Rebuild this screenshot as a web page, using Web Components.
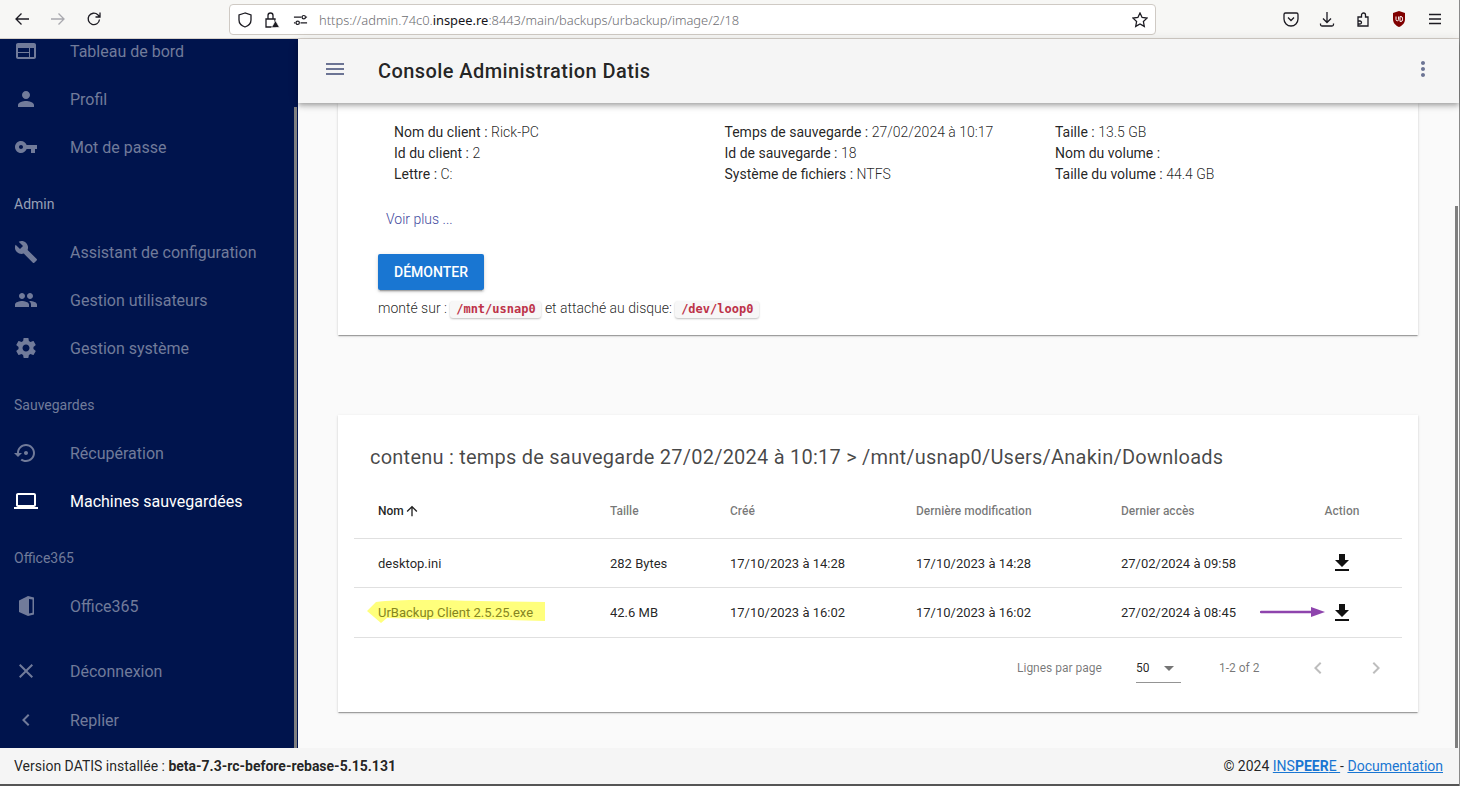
<!DOCTYPE html>
<html lang="fr">
<head>
<meta charset="utf-8">
<title>Console Administration Datis</title>
<style>
  html, body { margin: 0; height: 100%; overflow: hidden; }
  body { font-family: Roboto, "Liberation Sans", sans-serif; }
</style>
</head>
<body>
<admin-app>
  <browser-bar slot="bar" url-start="https://admin.74c0." url-domain="inspee.re" url-end=":8443/main/backups/urbackup/image/2/18"></browser-bar>

  <side-nav slot="side">
    <nav-item icon="web">Tableau de bord</nav-item>
    <nav-item icon="person">Profil</nav-item>
    <nav-item icon="key">Mot de passe</nav-item>
    <nav-label bright>Admin</nav-label>
    <nav-item icon="build">Assistant de configuration</nav-item>
    <nav-item icon="people">Gestion utilisateurs</nav-item>
    <nav-item icon="settings">Gestion système</nav-item>
    <nav-label>Sauvegardes</nav-label>
    <nav-item icon="restore">Récupération</nav-item>
    <nav-item icon="laptop" active>Machines sauvegardées</nav-item>
    <nav-label>Office365</nav-label>
    <nav-item icon="office">Office365</nav-item>
    <nav-item icon="close" class="spaced">Déconnexion</nav-item>
    <nav-item icon="left" class="last">Replier</nav-item>
  </side-nav>

  <app-header slot="header">Console Administration Datis</app-header>

  <info-card slot="main"></info-card>

  <file-table slot="main" title-text="contenu : temps de sauvegarde 27/02/2024 à 10:17 &gt; /mnt/usnap0/Users/Anakin/Downloads">
    <file-row name="desktop.ini" size="282 Bytes" created="17/10/2023 à 14:28" modified="17/10/2023 à 14:28" accessed="27/02/2024 à 09:58"></file-row>
    <file-row marked name="UrBackup Client 2.5.25.exe" size="42.6 MB" created="17/10/2023 à 16:02" modified="17/10/2023 à 16:02" accessed="27/02/2024 à 08:45"></file-row>
  </file-table>

  <app-footer slot="footer"></app-footer>
</admin-app>

<script>
'use strict';

const icons = {
  web: 'M20 4H4c-1.1 0-1.99.9-1.99 2L2 18c0 1.1.9 2 2 2h16c1.1 0 2-.9 2-2V6c0-1.1-.9-2-2-2zm-5 14H4v-4h11v4zm0-5H4V9h11v4zm5 5h-4V9h4v9z',
  person: 'M12 12c2.21 0 4-1.79 4-4s-1.79-4-4-4-4 1.79-4 4 1.79 4 4 4zm0 2c-2.67 0-8 1.34-8 4v2h16v-2c0-2.66-5.33-4-8-4z',
  key: 'M12.65 10C11.83 7.67 9.61 6 7 6c-3.31 0-6 2.69-6 6s2.69 6 6 6c2.61 0 4.83-1.67 5.65-4H17v4h4v-4h2v-4H12.65zM7 14c-1.1 0-2-.9-2-2s.9-2 2-2 2 .9 2 2-.9 2-2 2z',
  build: 'M22.7 19l-9.1-9.1c.9-2.3.4-5-1.5-6.9-2-2-5-2.4-7.4-1.3L9 6 6 9 1.6 4.7C.4 7.1.9 10.1 2.9 12.1c1.9 1.9 4.6 2.4 6.9 1.5l9.1 9.1c.4.4 1 .4 1.4 0l2.3-2.3c.5-.4.5-1.1.1-1.4z',
  people: 'M16 11c1.66 0 2.99-1.34 2.99-3S17.66 5 16 5c-1.66 0-3 1.34-3 3s1.34 3 3 3zm-8 0c1.66 0 2.99-1.34 2.99-3S9.66 5 8 5C6.34 5 5 6.34 5 8s1.34 3 3 3zm0 2c-2.33 0-7 1.17-7 3.5V19h14v-2.5c0-2.33-4.67-3.5-7-3.5zm8 0c-.29 0-.62.02-.97.05 1.16.84 1.97 1.97 1.97 3.45V19h6v-2.5c0-2.33-4.67-3.5-7-3.5z',
  settings: 'M19.43 12.98c.04-.32.07-.64.07-.98s-.03-.66-.07-.98l2.11-1.65c.19-.15.24-.42.12-.64l-2-3.46c-.12-.22-.39-.3-.61-.22l-2.49 1c-.52-.4-1.08-.73-1.69-.98l-.38-2.65C14.46 2.18 14.25 2 14 2h-4c-.25 0-.46.18-.49.42l-.38 2.65c-.61.25-1.17.59-1.69.98l-2.49-1c-.23-.09-.49 0-.61.22l-2 3.46c-.13.22-.07.49.12.64l2.11 1.65c-.04.32-.07.65-.07.98s.03.66.07.98l-2.11 1.65c-.19.15-.24.42-.12.64l2 3.46c.12.22.39.3.61.22l2.49-1c.52.4 1.08.73 1.69.98l.38 2.65c.03.24.24.42.49.42h4c.25 0 .46-.18.49-.42l.38-2.65c.61-.25 1.17-.59 1.69-.98l2.49 1c.23.09.49 0 .61-.22l2-3.46c.12-.22.07-.49-.12-.64l-2.11-1.65zM12 15.5c-1.93 0-3.5-1.57-3.5-3.5s1.57-3.5 3.5-3.5 3.5 1.57 3.5 3.5-1.57 3.5-3.5 3.5z',
  restore: 'M14 12c0-1.1-.9-2-2-2s-2 .9-2 2 .9 2 2 2 2-.9 2-2zm-2-9c-4.97 0-9 4.03-9 9H0l4 4 4-4H5c0-3.87 3.13-7 7-7s7 3.13 7 7-3.13 7-7 7c-1.51 0-2.91-.49-4.06-1.3l-1.42 1.44C8.04 20.3 9.94 21 12 21c4.97 0 9-4.03 9-9s-4.03-9-9-9z',
  laptop: 'M20 18c1.1 0 1.99-.9 1.99-2L22 6c0-1.1-.9-2-2-2H4c-1.1 0-2 .9-2 2v10c0 1.1.9 2 2 2H0v2h24v-2h-4zM4 6h16v10H4V6z',
  office: 'M5 6.500 14 2l6 1.500v17L14 22l-9-4zM15 5v14.500l3.500-.8V5.500z',
  close: 'M19 6.41L17.59 5 12 10.59 6.41 5 5 6.41 10.59 12 5 17.59 6.41 19 12 13.41 17.59 19 19 17.59 13.41 12z',
  left: 'M15.41 7.41L14 6l-6 6 6 6 1.41-1.41L10.83 12z',
  right: 'M10 6L8.59 7.41 13.17 12l-4.58 4.59L10 18l6-6z',
  menu: 'M3 18h18v-2H3v2zm0-5h18v-2H3v2zm0-7v2h18V6H3z',
  more: 'M12 8c1.1 0 2-.9 2-2s-.9-2-2-2-2 .9-2 2 .9 2 2 2zm0 2c-1.1 0-2 .9-2 2s.9 2 2 2 2-.9 2-2-.9-2-2-2zm0 6c-1.1 0-2 .9-2 2s.9 2 2 2 2-.9 2-2-.9-2-2-2z',
  download: 'M19 9h-4V3H9v6H5l7 7 7-7zM5 18v2h14v-2H5z',
  up: 'M4 12l1.41 1.41L11 7.83V20h2V7.83l5.58 5.59L20 12l-8-8-8 8z',
  drop: 'M7 10l5 5 5-5z',
};

const svg = (name, size = 24) =>
  `<svg width="${size}" height="${size}" viewBox="0 0 24 24" fill="currentColor" fill-rule="evenodd"><path d="${icons[name]}"/></svg>`;

// small base class, every element just gives its markup
class Shadowed extends HTMLElement {
  constructor() {
    super();
    this.attachShadow({ mode: 'open' });
  }
  connectedCallback() {
    this.shadowRoot.innerHTML = this.render();
  }
}

customElements.define('admin-app', class extends Shadowed {
  render() {
    return `
      <style>
        :host {
          display: grid;
          grid-template-columns: minmax(0, 1fr);
          grid-template-rows: 39px 1fr 38px;
          height: 786px;
          background: #fafafa;
          border-right: 1px solid #8a8a8a;
        }
        .body { display: flex; min-height: 0; }
        .content { flex: 1; min-width: 0; display: flex; flex-direction: column; position: relative; }
        .scroll { flex: 1; min-height: 0; overflow: hidden; padding: 0 41px 0 40px; }
        .thumb { position: absolute; right: 1px; top: 167px; bottom: 0; width: 3px; background: #7f7f7f; }
      </style>
      <slot name="bar"></slot>
      <div class="body">
        <slot name="side"></slot>
        <div class="content">
          <slot name="header"></slot>
          <div class="scroll"><slot name="main"></slot></div>
          <div class="thumb"></div>
        </div>
      </div>
      <slot name="footer"></slot>
    `;
  }
});

customElements.define('browser-bar', class extends Shadowed {
  render() {
    const g = this.getAttribute.bind(this);
    return `
      <style>
        :host {
          display: flex;
          align-items: center;
          height: 38px;
          background: #f7f7f5;
          border-bottom: 1px solid #d6d0ca;
          color: #1c1b22;
        }
        svg { display: block; flex: none; fill: none; stroke: currentColor; stroke-width: 1.3; }
        .nav { display: flex; gap: 20px; margin-left: 14px; width: 215px; }
        .off { color: #a9a9ae; }
        .url {
          width: 918px;
          height: 29px;
          margin-top: 1px;
          background: #fff;
          border: 1px solid #cfcac4;
          border-radius: 4px;
          display: flex;
          align-items: center;
          padding-left: 7px;
          box-sizing: content-box;
        }
        .url .mid { display: flex; gap: 11px; align-items: center; width: 82px; flex: none; }
        .mid .perm { margin-left: 2px; }
        .text {
          flex: 1;
          font: 300 12.9px "Noto Sans", "Open Sans", sans-serif;
          color: #6d6d72;
          white-space: nowrap;
        }
        .text b { font-weight: 400; color: #15141a; }
        .star { margin-right: 7px; }
        .tools { display: flex; gap: 20px; margin-left: 127px; }
      </style>
      <div class="nav">
        <svg width="16" height="16" viewBox="0 0 16 16"><path d="M15 8H2M7.5 2.5 2 8l5.5 5.5"/></svg>
        <svg class="off" width="16" height="16" viewBox="0 0 16 16"><path d="M1 8h13M8.5 2.5 14 8l-5.5 5.5"/></svg>
        <svg width="16" height="16" viewBox="0 0 16 16"><path d="M13.5 8.5A5.7 5.7 0 1 1 11.8 3.8L14 6M14 1.5V6H9.5"/></svg>
      </div>
      <div class="url">
        <div class="mid">
          <svg width="16" height="16" viewBox="0 0 16 16"><path d="M8 1 2 3v5c0 3.5 2.5 5.8 6 7 3.500-1.200 6-3.500 6-7V3z"/></svg>
          <svg width="16" height="16" viewBox="0 0 16 16"><path d="M4 7V3.500a2.500 2.500 0 0 1 5 0V7M2 7h9v8H2z"/><path d="M11.500 8.500 7.500 15.500h8z" fill="#1c1b22" stroke="#fff" stroke-width=".7"/></svg>
          <svg class="perm" width="15" height="16" viewBox="0 0 16 16"><path d="M1 5h8M14 5h1M1 11h1.500M8 11h7"/><circle cx="11.500" cy="5" r="1.800"/><circle cx="5" cy="11" r="1.800"/></svg>
        </div>
        <div class="text">${g('url-start')}<b>${g('url-domain')}</b>${g('url-end')}</div>
        <svg class="star" width="16" height="16" viewBox="0 0 16 16"><path d="m8 1 2.100 4.500 4.900.6-3.600 3.400.9 4.900L8 11.900l-4.300 2.500.9-4.900L1 6.100l4.900-.6z"/></svg>
      </div>
      <div class="tools">
        <svg width="16" height="16" viewBox="0 0 16 16"><path d="M2.500 2h11A1.500 1.500 0 0 1 15 3.500V8a7 7 0 0 1-14 0V3.500A1.500 1.500 0 0 1 2.500 2z"/><path d="m5 6.500 3 3 3-3"/></svg>
        <svg width="16" height="16" viewBox="0 0 16 16"><path d="M8 1v10M4 7.500 8 11.500l4-4M1.500 12.500v1a1.500 1.500 0 0 0 1.500 1.500h10a1.500 1.500 0 0 0 1.500-1.500v-1"/></svg>
        <svg width="16" height="16" viewBox="0 0 16 16"><path d="M3 15V6h3.500V4a2 2 0 0 1 4 0v2H13v9zM3 10h2a1.500 1.500 0 0 1 0 3H3"/></svg>
        <svg width="16" height="16" viewBox="0 0 16 16"><path d="M8 0 2 2v6c0 4 2.500 6.500 6 8 3.500-1.500 6-4 6-8V2z" fill="#800000" stroke="none"/><path d="M5 5.500v3a1.300 1.300 0 0 0 2.600 0v-3M9 5.500v5h.8a1.700 1.700 0 0 0 1.700-1.700V7.200A1.700 1.700 0 0 0 9.800 5.500z" stroke="#fff" stroke-width="1"/></svg>
        <svg width="16" height="16" viewBox="0 0 16 16"><path d="M2 3.500h12M2 8h12M2 12.500h12"/></svg>
      </div>
    `;
  }
});

customElements.define('side-nav', class extends Shadowed {
  render() {
    return `
      <style>
        :host {
          display: block;
          position: relative;
          flex: none;
          width: 298px;
          background: #00144d;
          overflow: hidden;
        }
        .list { margin-top: -12px; }
        .thumb { position: absolute; right: 1px; top: 68px; bottom: 0; width: 3px; background: #7f7f7f; }
      </style>
      <div class="list"><slot></slot></div>
      <div class="thumb"></div>
    `;
  }
});

customElements.define('nav-item', class extends Shadowed {
  render() {
    const active = this.hasAttribute('active');
    return `
      <style>
        :host {
          display: flex;
          align-items: center;
          height: 48px;
          padding-left: 14px;
          color: ${active ? '#fff' : '#717b9a'};
          font-size: 16px;
        }
        :host(.spaced) { margin-top: 17px; }
        :host(.last) { margin-top: 1px; }
        svg { display: block; margin-right: 32px; flex: none; }
      </style>
      ${svg(this.getAttribute('icon'))}
      <slot></slot>
    `;
  }
});

customElements.define('nav-label', class extends Shadowed {
  render() {
    return `
      <style>
        :host {
          display: flex;
          align-items: center;
          box-sizing: border-box;
          height: 57px;
          padding: 8px 0 0 14px;
          font-size: 14px;
          color: ${this.hasAttribute('bright') ? '#98a0b6' : '#717b9a'};
        }
      </style>
      <slot></slot>
    `;
  }
});

customElements.define('app-header', class extends Shadowed {
  render() {
    return `
      <style>
        :host {
          display: flex;
          align-items: center;
          flex: none;
          height: 64px;
          padding: 0 24px 0 25px;
          position: relative;
          z-index: 2;
          background: #f5f5f5;
          box-shadow: 0 2px 4px -1px rgba(0,0,0,.2), 0 4px 5px rgba(0,0,0,.14), 0 1px 10px rgba(0,0,0,.12);
        }
        .menu, .more { color: #6c7494; display: block; }
        h1 {
          flex: 1;
          margin: 0 0 0 31px;
          font: 500 20px Roboto, sans-serif;
          letter-spacing: .42px;
          color: rgba(0,0,0,.87);
        }
      </style>
      <span class="menu">${svg('menu')}</span>
      <h1><slot></slot></h1>
      <span class="more">${svg('more')}</span>
    `;
  }
});

customElements.define('info-card', class extends Shadowed {
  render() {
    const cols = [
      [['Nom du client', 'Rick-PC'], ['Id du client', '2'], ['Lettre', 'C:']],
      [['Temps de sauvegarde', '27/02/2024 à 10:17'], ['Id de sauvegarde', '18'], ['Système de fichiers', 'NTFS']],
      [['Taille', '13.5 GB'], ['Nom du volume', ''], ['Taille du volume', '44.4 GB']],
    ];
    return `
      <style>
        :host {
          display: block;
          box-sizing: border-box;
          height: 232px;
          margin-bottom: 80px;
          padding: 19px 40px 0;
          background: #fff;
          color: rgba(0,0,0,.87);
          font-size: 14px;
          box-shadow: 0 2px 1px -1px rgba(0,0,0,.2), 0 1px 1px rgba(0,0,0,.14), 0 1px 3px rgba(0,0,0,.12);
        }
        .grid { display: grid; grid-template-columns: repeat(3, 330.500px); padding-left: 16px; line-height: 21px; }
        .val { font-weight: 300; }
        .more { margin: 24px 0 0 8px; line-height: 21px; font-weight: 300; color: #3f4a9e; }
        button {
          display: block;
          margin-top: 24px;
          height: 36px;
          width: 106px;
          padding: 0;
          border: 0;
          border-radius: 2px;
          background: #1976d2;
          color: #fff;
          font: 500 14px Roboto, sans-serif;
          box-shadow: 0 3px 1px -2px rgba(0,0,0,.2), 0 2px 2px rgba(0,0,0,.14), 0 1px 5px rgba(0,0,0,.12);
        }
        .mount { margin-top: 6px; line-height: 24px; font-weight: 300; }
        code {
          display: inline-block;
          padding: 0 5.800px;
          border-radius: 3px;
          background: #f7f7f7;
          color: #bd3349;
          font: 700 12px/17px "DejaVu Sans Mono", monospace;
          box-shadow: 0 1px 2px rgba(0,0,0,.25);
        }
      </style>
      <div class="grid">
        ${cols.map((col) => `<div>${col.map(([k, v]) => `<div>${k} : <span class="val">${v}</span></div>`).join('')}</div>`).join('')}
      </div>
      <div class="more">Voir plus ...</div>
      <button>DÉMONTER</button>
      <div class="mount">monté sur : <code>/mnt/usnap0</code> et attaché au disque: <code>/dev/loop0</code></div>
    `;
  }
});

const rowColumns = '232px 120px 186px 205px 1fr 120px';

customElements.define('file-table', class extends Shadowed {
  render() {
    return `
      <style>
        :host {
          display: block;
          box-sizing: border-box;
          height: 297px;
          padding: 28px 16px 0;
          background: #fff;
          box-shadow: 0 2px 1px -1px rgba(0,0,0,.2), 0 1px 1px rgba(0,0,0,.14), 0 1px 3px rgba(0,0,0,.12);
        }
        h2 {
          margin: 0 0 12px 16px;
          font: 400 20px/28px Roboto, sans-serif;
          letter-spacing: .23px;
          color: rgba(0,0,0,.72);
        }
        .head {
          display: grid;
          grid-template-columns: ${rowColumns};
          align-items: center;
          height: 55px;
          padding-left: 24px;
          border-bottom: 1px solid #e0e0e0;
          font-size: 12px;
          font-weight: 500;
          color: rgba(0,0,0,.54);
        }
        .head .name { display: flex; align-items: center; color: rgba(0,0,0,.87); }
        .head .name svg { display: block; }
        .head .action { text-align: center; }
        .pager {
          display: flex;
          align-items: center;
          height: 60px;
          font-size: 12px;
          color: rgba(0,0,0,.54);
          padding-left: 663px;
        }
        .select {
          display: flex;
          align-items: center;
          justify-content: space-between;
          box-sizing: border-box;
          width: 45px;
          height: 30px;
          margin: 0 38px 0 34px;
          border-bottom: 1px solid rgba(0,0,0,.42);
          color: rgba(0,0,0,.87);
        }
        .select svg { color: rgba(0,0,0,.54); display: block; }
        .chev { display: flex; gap: 34px; margin-left: 46px; color: rgba(0,0,0,.26); }
        .chev svg { display: block; }
      </style>
      <h2>${this.getAttribute('title-text').replace('>', '&gt;')}</h2>
      <div class="head">
        <span class="name">Nom${svg('up', 16)}</span>
        <span>Taille</span>
        <span>Créé</span>
        <span>Dernière modification</span>
        <span>Dernier accès</span>
        <span class="action">Action</span>
      </div>
      <slot></slot>
      <div class="pager">
        <span>Lignes par page</span>
        <div class="select"><span>50</span>${svg('drop')}</div>
        <span>1-2 of 2</span>
        <div class="chev">${svg('left')}${svg('right')}</div>
      </div>
    `;
  }
});

customElements.define('file-row', class extends Shadowed {
  render() {
    const g = this.getAttribute.bind(this);
    const marked = this.hasAttribute('marked');
    return `
      <style>
        :host {
          display: grid;
          grid-template-columns: ${rowColumns};
          align-items: center;
          height: ${marked ? 49 : 48}px;
          padding-left: 24px;
          border-bottom: 1px solid #e0e0e0;
          font-size: 13px;
          color: rgba(0,0,0,.87);
          position: relative;
        }
        .action { display: flex; justify-content: center; color: #111; }
        .action svg { display: block; }
        .name { position: relative; white-space: nowrap; }
        .name span { position: relative; }
        .marker { position: absolute; left: -11px; top: -8px; }
        .marked { color: #85851f; }
        .arrow { position: absolute; left: 906px; top: 18px; }
      </style>
      <div class="name ${marked ? 'marked' : ''}">
        ${marked ? `<svg class="marker" width="180" height="26" viewBox="0 0 180 26"><path d="M0 14 9 5 C30 2 80 3 110 4 L178 5 V24 C130 23 90 21 60 22 L20 21 14 26 Z" fill="#ffff7c"/></svg>` : ''}
        <span>${g('name')}</span>
      </div>
      <div>${g('size')}</div>
      <div>${g('created')}</div>
      <div>${g('modified')}</div>
      <div>${g('accessed')}</div>
      <div class="action">${svg('download')}</div>
      ${marked ? `<svg class="arrow" width="66" height="12" viewBox="0 0 66 12"><path d="M1 6h52" stroke="#8e44ad" stroke-width="2.500" stroke-linecap="round"/><path d="M51 1 65 6 51 11z" fill="#8e44ad"/></svg>` : ''}
    `;
  }
});

customElements.define('app-footer', class extends Shadowed {
  render() {
    return `
      <style>
        :host {
          display: flex;
          align-items: center;
          justify-content: space-between;
          box-sizing: border-box;
          height: 38px;
          padding: 0 16px 0 14px;
          background: #f5f5f5;
          border-bottom: 2px solid #555;
          font-size: 14px;
          color: rgba(0,0,0,.87);
          position: relative;
          z-index: 3;
        }
        b { font-weight: 700; }
        a { color: #1976d2; }
      </style>
      <div>Version DATIS installée : <b>beta-7.3-rc-before-rebase-5.15.131</b></div>
      <div>© 2024 <a href="#">INS<b>PEER</b>E </a> - <a href="#">Documentation</a></div>
    `;
  }
});
</script>
</body>
</html>
